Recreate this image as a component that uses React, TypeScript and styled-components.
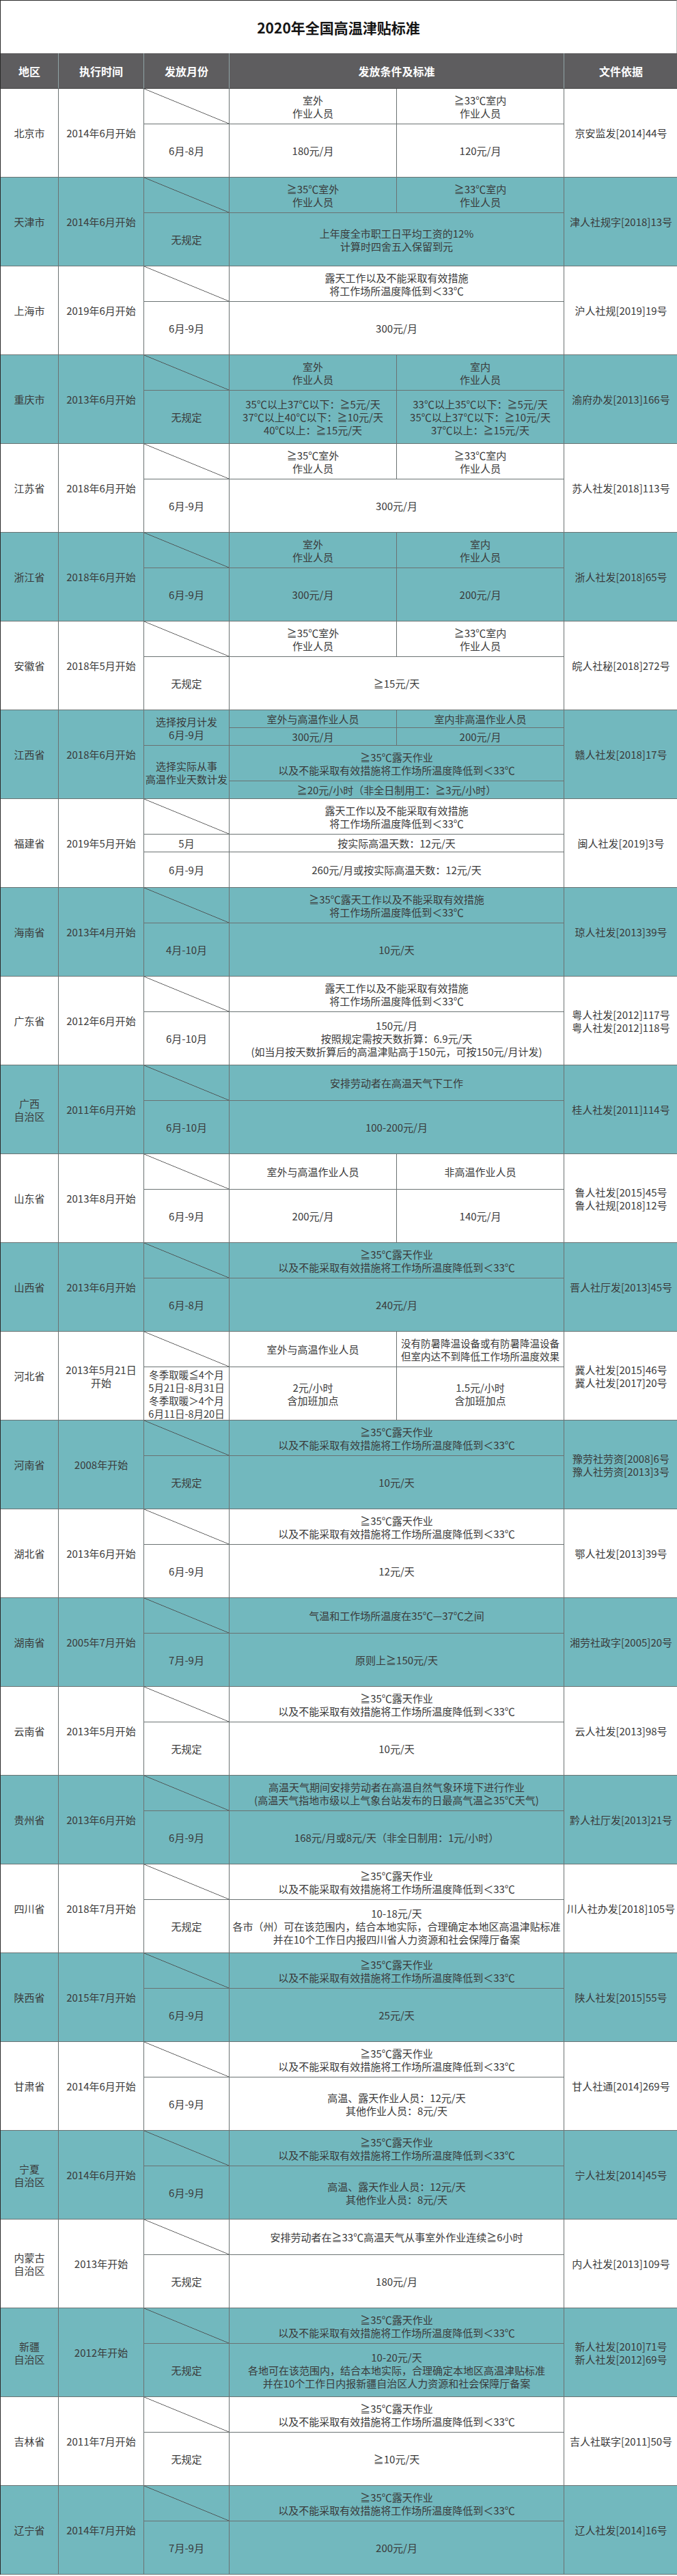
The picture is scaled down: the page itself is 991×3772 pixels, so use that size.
import React from 'react';
import styled, { createGlobalStyle } from 'styled-components';

const GlobalStyle = createGlobalStyle`
  html, body {
    margin: 0;
    padding: 0;
    background: #ffffff;
  }
  * {
    box-sizing: border-box;
  }
`;

const COLS = '85px 125px 125px 245px 245px 166px';
const TEAL = '#72b8be';
const LINE = '#6a7272';
const FONT = '"Noto Sans CJK SC", "Noto Sans", "Liberation Sans", sans-serif';

const Sheet = styled.div`
  width: 991px;
  border-left: 1px solid #2a2a2a;
  font-family: ${FONT};
  color: #3a3a3a;
`;

const Title = styled.h1`
  margin: 0;
  height: 78px;
  display: flex;
  align-items: center;
  justify-content: center;
  border-top: 1px solid #2a2a2a;
  border-right: 1px solid #bbbbbb;
  font-size: 21px;
  font-weight: 700;
  color: #151515;
  letter-spacing: 0;
`;

const HeaderRow = styled.div`
  display: grid;
  grid-template-columns: ${COLS};
  height: 52px;
  background: #5e5d5f;
`;

const HeaderCell = styled.div<{ $span?: boolean; $last?: boolean }>`
  grid-column: ${({ $span }) => ($span ? 'span 2' : 'span 1')};
  display: flex;
  align-items: center;
  justify-content: center;
  color: #ffffff;
  font-size: 16px;
  font-weight: 700;
  border-right: ${({ $last }) => ($last ? 'none' : '1px solid #8fa3a5')};
  border-bottom: 1px solid #3f3f3f;
`;

const Block = styled.div<{ $rows: string; $teal: boolean }>`
  display: grid;
  grid-template-columns: ${COLS};
  grid-template-rows: ${({ $rows }) => $rows};
  background: ${({ $teal }) => ($teal ? TEAL : '#ffffff')};
`;

const Cell = styled.div<{ $row: string; $col: string; $last: boolean; $diag?: boolean; $small?: boolean }>`
  grid-row: ${({ $row }) => $row};
  grid-column: ${({ $col }) => $col};
  display: flex;
  align-items: center;
  justify-content: center;
  text-align: center;
  white-space: pre;
  font-size: ${({ $small }) => ($small ? '14.5px' : '15px')};
  line-height: 19px;
  padding: 0 1px;
  border-right: ${({ $last }) => ($last ? 'none' : `1px solid ${LINE}`)};
  border-bottom: 1px solid ${LINE};
  background: ${({ $diag }) =>
    $diag
      ? `linear-gradient(to top right, transparent calc(50% - 0.8px), #4a4a4a 50%, transparent calc(50% + 0.8px))`
      : 'transparent'};
`;

type CellData = { t?: string; r: string; c: string; diag?: boolean; small?: boolean };
type Region = { teal: boolean; rows: string; cells: CellData[] };

const split = (v: string | [string, string], r: string): CellData[] =>
  Array.isArray(v)
    ? [
        { t: v[0], r, c: '4' },
        { t: v[1], r, c: '5' },
      ]
    : [{ t: v, r, c: '4 / 6' }];

const std = (
  name: string,
  time: string,
  cond: string | [string, string],
  month: string,
  amount: string | [string, string],
  doc: string,
): CellData[] => [
  { t: name, r: '1 / 3', c: '1' },
  { t: time, r: '1 / 3', c: '2' },
  { diag: true, r: '1', c: '3' },
  ...split(cond, '1'),
  { t: month, r: '2', c: '3' },
  ...split(amount, '2'),
  { t: doc, r: '1 / 3', c: '6' },
];

const OPEN = '露天工作以及不能采取有效措施\n将工作场所温度降低到＜33℃';
const OPEN35 = '≧35℃露天作业\n以及不能采取有效措施将工作场所温度降低到＜33℃';
const OUT_IN: [string, string] = ['室外\n作业人员', '室内\n作业人员'];
const OUT_IN_T: [string, string] = ['≧35℃室外\n作业人员', '≧33℃室内\n作业人员'];

const cells: CellData[][] = [
  std('北京市', '2014年6月开始', ['室外\n作业人员', '≧33℃室内\n作业人员'], '6月-8月', ['180元/月', '120元/月'], '京安监发[2014]44号'),
  std('天津市', '2014年6月开始', OUT_IN_T, '无规定', '上年度全市职工日平均工资的12%\n计算时四舍五入保留到元', '津人社规字[2018]13号'),
  std('上海市', '2019年6月开始', OPEN, '6月-9月', '300元/月', '沪人社规[2019]19号'),
  std(
    '重庆市',
    '2013年6月开始',
    OUT_IN,
    '无规定',
    [
      '35℃以上37℃以下：≧5元/天\n37℃以上40℃以下：≧10元/天\n40℃以上：≧15元/天',
      '33℃以上35℃以下：≧5元/天\n35℃以上37℃以下：≧10元/天\n37℃以上：≧15元/天',
    ],
    '渝府办发[2013]166号',
  ),
  std('江苏省', '2018年6月开始', OUT_IN_T, '6月-9月', '300元/月', '苏人社发[2018]113号'),
  std('浙江省', '2018年6月开始', OUT_IN, '6月-9月', ['300元/月', '200元/月'], '浙人社发[2018]65号'),
  std('安徽省', '2018年5月开始', OUT_IN_T, '无规定', '≧15元/天', '皖人社秘[2018]272号'),
  [
    { t: '江西省', r: '1 / 5', c: '1' },
    { t: '2018年6月开始', r: '1 / 5', c: '2' },
    { t: '选择按月计发\n6月-9月', r: '1 / 3', c: '3' },
    { t: '室外与高温作业人员', r: '1', c: '4' },
    { t: '室内非高温作业人员', r: '1', c: '5' },
    { t: '300元/月', r: '2', c: '4' },
    { t: '200元/月', r: '2', c: '5' },
    { t: '选择实际从事\n高温作业天数计发', r: '3 / 5', c: '3' },
    { t: OPEN35, r: '3', c: '4 / 6' },
    { t: '≧20元/小时（非全日制用工：≧3元/小时）', r: '4', c: '4 / 6' },
    { t: '赣人社发[2018]17号', r: '1 / 5', c: '6' },
  ],
  [
    { t: '福建省', r: '1 / 4', c: '1' },
    { t: '2019年5月开始', r: '1 / 4', c: '2' },
    { diag: true, r: '1', c: '3' },
    { t: OPEN, r: '1', c: '4 / 6' },
    { t: '5月', r: '2', c: '3' },
    { t: '按实际高温天数：12元/天', r: '2', c: '4 / 6' },
    { t: '6月-9月', r: '3', c: '3' },
    { t: '260元/月或按实际高温天数：12元/天', r: '3', c: '4 / 6' },
    { t: '闽人社发[2019]3号', r: '1 / 4', c: '6' },
  ],
  std('海南省', '2013年4月开始', '≧35℃露天工作以及不能采取有效措施\n将工作场所温度降低到＜33℃', '4月-10月', '10元/天', '琼人社发[2013]39号'),
  std(
    '广东省',
    '2012年6月开始',
    OPEN,
    '6月-10月',
    '150元/月\n按照规定需按天数折算：6.9元/天\n(如当月按天数折算后的高温津贴高于150元，可按150元/月计发)',
    '粤人社发[2012]117号\n粤人社发[2012]118号',
  ),
  std('广西\n自治区', '2011年6月开始', '安排劳动者在高温天气下工作', '6月-10月', '100-200元/月', '桂人社发[2011]114号'),
  std('山东省', '2013年8月开始', ['室外与高温作业人员', '非高温作业人员'], '6月-9月', ['200元/月', '140元/月'], '鲁人社发[2015]45号\n鲁人社规[2018]12号'),
  std('山西省', '2013年6月开始', OPEN35, '6月-8月', '240元/月', '晋人社厅发[2013]45号'),
  [
    { t: '河北省', r: '1 / 3', c: '1' },
    { t: '2013年5月21日\n开始', r: '1 / 3', c: '2' },
    { diag: true, r: '1', c: '3' },
    { t: '室外与高温作业人员', r: '1', c: '4' },
    { t: '没有防暑降温设备或有防暑降温设备\n但室内达不到降低工作场所温度效果', r: '1', c: '5', small: true },
    { t: '冬季取暖≦4个月\n5月21日-8月31日\n冬季取暖＞4个月\n6月11日-8月20日', r: '2', c: '3', small: true },
    { t: '2元/小时\n含加班加点', r: '2', c: '4' },
    { t: '1.5元/小时\n含加班加点', r: '2', c: '5' },
    { t: '冀人社发[2015]46号\n冀人社发[2017]20号', r: '1 / 3', c: '6' },
  ],
  std('河南省', '2008年开始', OPEN35, '无规定', '10元/天', '豫劳社劳资[2008]6号\n豫人社劳资[2013]3号'),
  std('湖北省', '2013年6月开始', OPEN35, '6月-9月', '12元/天', '鄂人社发[2013]39号'),
  std('湖南省', '2005年7月开始', '气温和工作场所温度在35℃—37℃之间', '7月-9月', '原则上≧150元/天', '湘劳社政字[2005]20号'),
  std('云南省', '2013年5月开始', OPEN35, '无规定', '10元/天', '云人社发[2013]98号'),
  std(
    '贵州省',
    '2013年6月开始',
    '高温天气期间安排劳动者在高温自然气象环境下进行作业\n(高温天气指地市级以上气象台站发布的日最高气温≧35℃天气)',
    '6月-9月',
    '168元/月或8元/天（非全日制用：1元/小时）',
    '黔人社厅发[2013]21号',
  ),
  std(
    '四川省',
    '2018年7月开始',
    OPEN35,
    '无规定',
    '10-18元/天\n各市（州）可在该范围内，结合本地实际，合理确定本地区高温津贴标准\n并在10个工作日内报四川省人力资源和社会保障厅备案',
    '川人社办发[2018]105号',
  ),
  std('陕西省', '2015年7月开始', OPEN35, '6月-9月', '25元/天', '陕人社发[2015]55号'),
  std('甘肃省', '2014年6月开始', OPEN35, '6月-9月', '高温、露天作业人员：12元/天\n其他作业人员：8元/天', '甘人社通[2014]269号'),
  std('宁夏\n自治区', '2014年6月开始', OPEN35, '6月-9月', '高温、露天作业人员：12元/天\n其他作业人员：8元/天', '宁人社发[2014]45号'),
  std('内蒙古\n自治区', '2013年开始', '安排劳动者在≧33℃高温天气从事室外作业连续≧6小时', '无规定', '180元/月', '内人社发[2013]109号'),
  std(
    '新疆\n自治区',
    '2012年开始',
    OPEN35,
    '无规定',
    '10-20元/天\n各地可在该范围内，结合本地实际，合理确定本地区高温津贴标准\n并在10个工作日内报新疆自治区人力资源和社会保障厅备案',
    '新人社发[2010]71号\n新人社发[2012]69号',
  ),
  std('吉林省', '2011年7月开始', OPEN35, '无规定', '≧10元/天', '吉人社联字[2011]50号'),
  std('辽宁省', '2014年7月开始', OPEN35, '7月-9月', '200元/月', '辽人社发[2014]16号'),
];

const rowsFor = (i: number) => {
  if (i === 7) return '26px 26px 52px 26px';
  if (i === 8) return '52px 26px 52px';
  return '52px 78px';
};

const regions: Region[] = cells.map((c, i) => ({ teal: i % 2 === 1, rows: rowsFor(i), cells: c }));

const App = () => {
  return (
    <>
      <GlobalStyle />
      <Sheet>
        <Title>2020年全国高温津贴标准</Title>
        <HeaderRow>
          <HeaderCell>地区</HeaderCell>
          <HeaderCell>执行时间</HeaderCell>
          <HeaderCell>发放月份</HeaderCell>
          <HeaderCell $span>发放条件及标准</HeaderCell>
          <HeaderCell $last>文件依据</HeaderCell>
        </HeaderRow>
        {regions.map((region, i) => (
          <Block key={i} $rows={region.rows} $teal={region.teal}>
            {region.cells.map((cell, j) => (
              <Cell
                key={j}
                $row={cell.r}
                $col={cell.c}
                $last={cell.c === '6'}
                $diag={cell.diag}
                $small={cell.small}
              >
                {cell.t}
              </Cell>
            ))}
          </Block>
        ))}
      </Sheet>
    </>
  );
};

export default App;
